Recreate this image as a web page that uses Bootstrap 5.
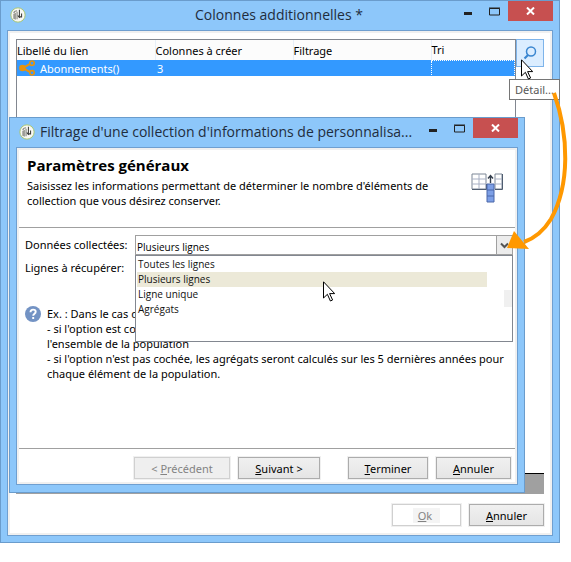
<!DOCTYPE html>
<html lang="fr">
<head>
<meta charset="utf-8">
<meta name="viewport" content="width=device-width, initial-scale=1">
<title>Colonnes additionnelles</title>
<link href="https://cdn.jsdelivr.net/npm/bootstrap@5.3.0/dist/css/bootstrap.min.css" rel="stylesheet">
<style>
  body { font-family: "Noto Sans", "Open Sans", sans-serif; font-size: 11px; line-height: 15px; color: #000; background: #fff; }
  .win { background: #8dc7fa; border: 1px solid #6a9ccc; }
  .win-outer { margin-right: 11px; padding: 0 6px 6px; height: 543px; }
  .win-inner { left: 9px; right: 46px; top: 117px; height: 376px; padding: 0 6px 7px; z-index: 2; }
  .win-bar { height: 29px; padding-left: 3px; color: #1f2d3d; font-family: "Open Sans", sans-serif; font-size: 14px; line-height: 20px; }
  .win-bar svg { flex: none; }
  .bar-title { padding: 4px 0 0 5px; }
  .bar-title.text-center { padding-left: 80px; }
  .win-ctl { border: 0; background: none; padding: 0; height: 20px; width: 28px; display: flex; align-items: center; justify-content: center; }
  .win-close { background: #c75050; width: 45px; }
  .pane { background: #fff; border: 1px solid #6f9fd0; box-shadow: inset 0 0 0 2px #f0f0f0; }
  .pane-outer { padding: 8px 8px 9px; }
  .pane-inner { padding: 2px; }
  .grid-box { border: 1px solid #828790; border-bottom: 0; }
  .grid-tbl { table-layout: fixed; width: 100%; }
  .grid-tbl th { font-weight: 400; height: 20px; background: #fcfcfc; padding: 0; border-right: 1px solid #e6eff8; }
  .grid-tbl th:last-child { border-right: 0; }
  .grid-tbl td { height: 16px; background: #3399ff; color: #fff; padding: 0 2px; }
  .grid-tbl td:last-child { border: 1px dotted #fff; }
  .c-col { width: 138px; }
  .detail-btn { flex: none; width: 28px; height: 28px; background: #dbedff; border: 1px solid #7eb4ea; padding: 0; }
  .strip { height: 21px; background: #a0a0a0; border-top: 1px solid #000; }
  .dlg-btn { height: 22px; border: 1px solid #acacac; outline: 1px solid #f0f0f0; background: linear-gradient(#f0f0f0, #e5e5e5); color: #000; padding: 0; font-size: 11px; line-height: 15px; }
  .dlg-btn:disabled { color: #838383; border-color: #d0d0d0; background: #efefef; }
  .dlg-btn.ok-btn:disabled { background: #fff; }
  .ok-btn span { background: #f4f4f4; padding: 0 8px 0 5px; }
  .w-s { width: 69px; } .w-m { width: 75px; } .w-t { width: 80px; } .w-n { width: 82px; } .w-p { width: 96px; }
  .outer-foot { padding-top: 10px; }
  .intro { padding: 5px 10px 19px 8px; border-bottom: 1px solid #a0a0a0; }
  .intro svg { margin-top: 18px; }
  .intro h1 { font-family: "Open Sans", sans-serif; font-size: 15px; line-height: 20px; font-weight: 700; margin: 0 0 3px; }
  .fields { padding: 7px 2px 0 6px; }
  .field-label { width: 110px; padding-top: 2px; white-space: nowrap; }
  .rows-label { padding-top: 5px; }
  .hint { margin-top: 31px; white-space: nowrap; }
  .pick { font-family: "Open Sans", sans-serif; font-size: 10px; line-height: 15px; appearance: none; border: 1px solid #a0a0a0; background: #fff; height: 20px; padding: 4px 1px 0; border-radius: 0; color: #000; }
  .pick-arrow { right: 0; top: 0; width: 17px; height: 20px; border: 1px solid #a0a0a0; background: #ececec; pointer-events: none; }
  .pick-list { left: 0; right: 0; top: 20px; height: 87px; border: 1px solid #828790; background: #fff; font-family: "Open Sans", sans-serif; font-size: 10px; padding: 1px 0 0 1px; z-index: 3; }
  .pick-list button { display: block; width: calc(100% - 25px); height: 15px; line-height: 15px; border: 0; background: none; padding: 0 1px; text-align: left; color: #111; }
  .pick-list button.chosen { background: #ece9d8; }
  .thumb { right: 0; top: 34px; width: 8px; height: 17px; background: #f0f0f0; }
  .dlg-foot { border-top: 1px solid #a0a0a0; padding: 8px 4px 3px; }
  .tip { left: 509px; top: 79px; border: 1px solid #767676; background: #fff; color: #575757; padding: 2px 1px 2px 5px; width: 51px; height: 21px; z-index: 3; white-space: nowrap; }
  .ptr-a { left: 521px; top: 59px; z-index: 4; }
  .ptr-b { left: 323px; top: 281px; z-index: 5; }
  .callout { left: 500px; top: 85px; z-index: 6; pointer-events: none; }
</style>
</head>
<body class="position-relative">
<svg width="0" height="0" class="position-absolute" aria-hidden="true">
  <symbol id="logo" viewBox="0 0 17 17">
    <circle cx="8.500" cy="8.500" r="7.600" fill="#f8f8f4" stroke="#a9c46a" stroke-width="1"/>
    <path d="M3.500 7.500l2.800-1.500v7.500l-2.800-1z" fill="#9a9a94"/>
    <path d="M4 6.500c.5-2 2-2.500 3.500-2.500M7.500 5v8" fill="none" stroke="#8a8a82" stroke-width="1.200"/>
    <path d="M10 2.800v7.500M8.300 9l2 2.500M12.300 7v3.500h-2" fill="none" stroke="#3c3c38" stroke-width="1.100"/>
  </symbol>
  <symbol id="cursor" viewBox="0 0 12 21">
    <path d="M.5.800v16.200l3.900-3.700 3 6.700 2.200-1-3-6.400h5.100z" fill="#fff" stroke="#000"/>
  </symbol>
  <symbol id="close" viewBox="0 0 9 8"><path d="M1 .5l7 7M8 .5l-7 7" stroke="#fff" stroke-width="2"/></symbol>
</svg>

<main class="win win-outer d-flex flex-column">
  <header class="win-bar d-flex align-items-start">
    <svg class="mt-1" width="16" height="20"><use href="#logo" y="2" width="16" height="16"/></svg>
    <div class="bar-title flex-grow-1 text-center">Colonnes additionnelles *</div>
    <button class="win-ctl" type="button" aria-label="Réduire"><svg width="12" height="20"><path d="M4 12.500h8" stroke="#222" stroke-width="3"/></svg></button>
    <button class="win-ctl" type="button" aria-label="Agrandir"><svg width="11" height="9"><path d="M.5 1.500h10v6.500h-10zM0 1h11" fill="none" stroke="#222"/></svg></button>
    <button class="win-ctl win-close" type="button" aria-label="Fermer"><svg width="9" height="8"><use href="#close"/></svg></button>
  </header>
  <div class="pane pane-outer flex-grow-1 d-flex flex-column">
    <div class="d-flex flex-grow-1 align-items-stretch">
      <div class="grid-box flex-grow-1">
        <table class="grid-tbl">
          <colgroup><col class="c-col"><col class="c-col"><col class="c-col"><col></colgroup>
          <thead><tr><th scope="col">Libellé du lien</th><th scope="col">Colonnes à créer</th><th scope="col">Filtrage</th><th scope="col">Tri</th></tr></thead>
          <tbody><tr>
            <td><span class="d-flex align-items-center gap-1"><svg width="17" height="16" viewBox="0 0 17 16"><circle cx="3.500" cy="8" r="3.300" fill="#e8930c"/><path d="M11 3.800L4 8l7 4.200" fill="none" stroke="#e8930c" stroke-width="2"/><circle cx="13" cy="3.200" r="2.200" fill="#3399ff" stroke="#e8930c" stroke-width="1.600"/><circle cx="13" cy="12.800" r="2.200" fill="#3399ff" stroke="#e8930c" stroke-width="1.600"/></svg>Abonnements()</span></td>
            <td>3</td><td></td><td></td>
          </tr></tbody>
        </table>
      </div>
      <button class="detail-btn d-flex align-items-center justify-content-center" type="button" aria-label="Détail"><svg width="14" height="14" viewBox="0 0 14 14"><circle cx="8" cy="5.500" r="4.500" fill="none" stroke="#3a86d0" stroke-width="1.500"/><path d="M5 9l-3.500 3.500" stroke="#3a86d0" stroke-width="2.200"/></svg></button>
    </div>
    <div class="strip"></div>
    <div class="outer-foot d-flex justify-content-end gap-2">
      <button class="dlg-btn ok-btn w-s" type="button" disabled><span><u>O</u>k</span></button>
      <button class="dlg-btn w-m" type="button"><u>A</u>nnuler</button>
    </div>
  </div>
</main>

<section class="win win-inner position-absolute d-flex flex-column">
  <header class="win-bar d-flex align-items-start">
    <svg class="mt-1" width="16" height="20"><use href="#logo" y="2" width="16" height="16"/></svg>
    <div class="bar-title flex-grow-1 text-nowrap">Filtrage d'une collection d'informations de personnalisa...</div>
    <button class="win-ctl" type="button" aria-label="Réduire"><svg width="12" height="20"><path d="M4 12.500h8" stroke="#222" stroke-width="3"/></svg></button>
    <button class="win-ctl" type="button" aria-label="Agrandir"><svg width="11" height="9"><path d="M.5 1.500h10v6.500h-10zM0 1h11" fill="none" stroke="#222"/></svg></button>
    <button class="win-ctl win-close" type="button" aria-label="Fermer"><svg width="9" height="8"><use href="#close"/></svg></button>
  </header>
  <div class="pane pane-inner flex-grow-1 d-flex flex-column">
    <div class="intro d-flex justify-content-between">
      <div>
        <h1>Paramètres généraux</h1>
        <div>Saisissez les informations permettant de déterminer le nombre d'éléments de<br>collection que vous désirez conserver.</div>
      </div>
      <svg width="34" height="32" viewBox="0 0 34 32">
        <path d="M1 1h14v15H1zM24 1h7v15h-7z" fill="#fff" stroke="#7c8796"/>
        <path d="M8 1v15M1 6h14M1 11h14M24 6h7M24 11h7" stroke="#a8b0c4" fill="none"/>
        <path d="M15.500 11v5.500H1M31.500 1v15.500H24" fill="none" stroke="#4f5d70"/>
        <path d="M16 11h7v18h-7z" fill="#7d9fe6" stroke="#4a66a8"/><path d="M16 17h7M16 23h7" stroke="#4a66a8"/>
        <path d="M19.500 10V3M17 5.500L19.500 2.500 22 5.500" fill="none" stroke="#333d4c" stroke-width="1.400"/>
      </svg>
    </div>
    <div class="fields flex-grow-1">
      <div class="d-flex">
        <label class="field-label" for="collect">Données collectées:</label>
        <div class="position-relative flex-grow-1">
          <select id="collect" class="pick w-100 d-block"><option>Plusieurs lignes</option></select>
          <span class="pick-arrow position-absolute d-flex align-items-center justify-content-center"><svg width="9" height="7"><path d="M1 1.500l3.500 3.500L8 1.500" fill="none" stroke="#555" stroke-width="2"/></svg></span>
          <div class="pick-list position-absolute">
            <button type="button">Toutes les lignes</button>
            <button type="button" class="chosen">Plusieurs lignes</button>
            <button type="button">Ligne unique</button>
            <button type="button">Agrégats</button>
            <span class="thumb position-absolute"></span>
          </div>
        </div>
      </div>
      <div class="rows-label">Lignes à récupérer:</div>
      <div class="hint d-flex">
        <svg class="flex-shrink-0 me-1" width="18" height="16" viewBox="0 0 18 16"><circle cx="8" cy="8" r="8" fill="#7393c4"/><path d="M5.500 6.200c0-3.600 5.200-3.200 5.200-.4 0 2-2.500 1.800-2.500 4M8.200 11v2" fill="none" stroke="#fff" stroke-width="1.900"/></svg>
        <div>Ex. : Dans le cas d<br>- si l'option est co<br>l'ensemble de la population<br>- si l'option n'est pas cochée, les agrégats seront calculés sur les 5 dernières années pour<br>chaque élément de la population.</div>
      </div>
    </div>
    <div class="dlg-foot d-flex justify-content-end gap-2">
      <button class="dlg-btn w-p" type="button" disabled>&lt; <u>P</u>récédent</button>
      <button class="dlg-btn w-n me-3" type="button"><u>S</u>uivant &gt;</button>
      <button class="dlg-btn w-t ms-1" type="button"><u>T</u>erminer</button>
      <button class="dlg-btn w-m" type="button"><u>A</u>nnuler</button>
    </div>
  </div>
</section>

<div class="tip position-absolute">Détail...</div>
<svg class="ptr-a position-absolute" width="12" height="21"><use href="#cursor"/></svg>
<svg class="ptr-b position-absolute" width="12" height="21"><use href="#cursor"/></svg>
<svg class="callout position-absolute" width="71" height="170"><path d="M54 8C69 50 70 100 51 134 43 147 35 153 24 157" fill="none" stroke="#ff9800" stroke-width="4"/><path d="M7 163l7-17 15 18z" fill="#ff9800"/></svg>
<script src="https://cdn.jsdelivr.net/npm/bootstrap@5.3.0/dist/js/bootstrap.bundle.min.js"></script>
</body>
</html>
